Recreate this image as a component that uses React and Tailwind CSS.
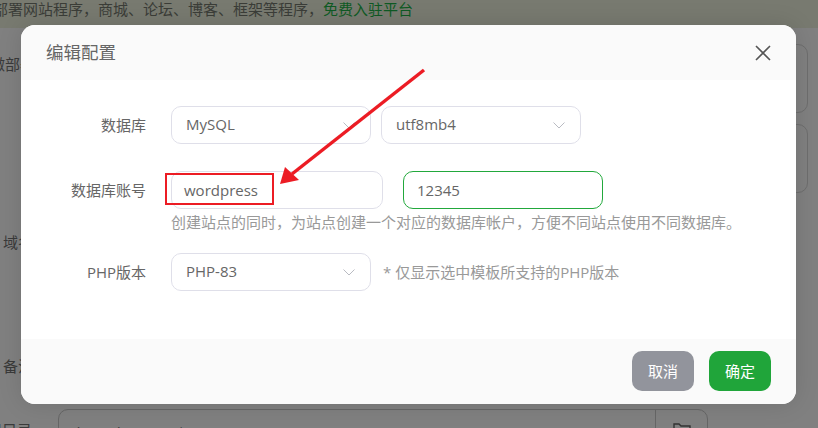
const FONT = 'font-["Open_Sans","Noto_Sans_CJK_SC",sans-serif]';

function Chevron({ className }) {
  return (
    <svg className={className} width="12" height="7" viewBox="0 0 12 7" fill="none" stroke="#b9bbc2" strokeWidth="1">
      <path d="M.5.5L6 6l5.5-5.5" />
    </svg>
  );
}

function Select({ value, width }) {
  return (
    <div className={`flex h-[38px] items-center justify-between rounded-[10px] border border-[#dfdfe9] bg-white pl-[14px] pr-[15px] text-[15px] text-[#666666] ${width}`}>
      <span className="-mt-[2px]">{value}</span>
      <Chevron />
    </div>
  );
}

function Row({ label, children, className = '' }) {
  return (
    <div className={`flex items-center ${className}`}>
      <div className="mr-[25px] w-[125px] text-right text-[15px] text-[#666666]">{label}</div>
      {children}
    </div>
  );
}

function Background() {
  return (
    <div className="flex h-full flex-col bg-[#808080] text-[15px] leading-[22px] text-[#3a3a3a]">
      <div className="flex h-[28px] shrink-0 items-start whitespace-nowrap bg-[#787a70] text-[#3b3d38]">
        <span className="-ml-[7px] -mt-[2px]">部署网站程序，商城、论坛、博客、框架等程序，</span>
        <span className="-mt-[2px] text-[#0f5a24]">免费入驻平台</span>
      </div>
      <div className="flex-1">
        <div className="flex justify-between pt-[16px]">
          <span className="-ml-[10px] mt-[9px]">微部署</span>
          <div className="mr-[10px] flex flex-col gap-[11px]">
            <div className="h-[69px] w-[60px] rounded-[10px] border border-[#6e6e6e]" />
            <div className="h-[69px] w-[60px] rounded-[10px] border border-[#6e6e6e]" />
          </div>
        </div>
        <div className="mt-[38px] pl-[3px]">域名</div>
        <div className="mt-[102px] pl-[3px]">备注</div>
        <div className="mt-[32px] flex items-start">
          <span className="-ml-[13px] mt-[10px] w-[71px] whitespace-nowrap">根目录</span>
          <div className="flex h-[40px] w-[650px] rounded-[10px] border border-[#666666]">
            <span className="flex-1 pl-[15px] pt-[10px]">/www/wwwroot</span>
            <div className="flex w-[52px] justify-center border-l border-[#666666] pt-[12px]">
              <svg width="18" height="15" viewBox="0 0 18 15" fill="none" stroke="#333333" strokeWidth="1.4">
                <path d="M1 13V2h5l2 2h9v9z" />
              </svg>
            </div>
          </div>
        </div>
      </div>
    </div>
  );
}

export default function App() {
  return (
    <div className={`relative h-[428px] w-[818px] overflow-hidden ${FONT}`}>
      <Background />

      <div className="absolute left-[21px] top-[25px] flex h-[379px] w-[775px] flex-col overflow-hidden rounded-[14px] bg-white shadow-[0_0_24px_rgba(0,0,0,0.12)]">
        <div className="flex h-[55px] shrink-0 items-center justify-between bg-[#fafafa] px-[25px]">
          <span className="text-[17.5px] text-[#666666]">编辑配置</span>
          <svg width="16" height="16" viewBox="0 0 16 16" stroke="#555555" strokeWidth="1.6">
            <path d="M1 1l14 14M15 1L1 15" />
          </svg>
        </div>

        <div className="flex-1 pt-[26px]">
          <Row label="数据库">
            <Select value="MySQL" width="w-[200px]" />
            <div className="w-[10px]" />
            <Select value="utf8mb4" width="w-[200px]" />
          </Row>

          <Row label="数据库账号" className="mt-[27px]">
            <div className="flex h-[38px] w-[212px] items-center rounded-[10px] border border-[#dfdfe9] pl-[12px] text-[15px] text-[#666666]">
              wordpress
            </div>
            <div className="w-[20px]" />
            <div className="flex h-[38px] w-[200px] items-center rounded-[10px] border border-[#22a83c] pl-[13px] text-[15px] text-[#666666]">
              12345
            </div>
          </Row>
          <div className="ml-[150px] mt-[2px] text-[15px] leading-[22px] text-[#999999]">
            创建站点的同时，为站点创建一个对应的数据库帐户，方便不同站点使用不同数据库。
          </div>

          <Row label="PHP版本" className="mt-[20px]">
            <Select value="PHP-83" width="w-[200px]" />
            <span className="ml-[12px] text-[15px] text-[#999999]">* 仅显示选中模板所支持的PHP版本</span>
          </Row>
        </div>

        <div className="flex h-[65px] shrink-0 items-start justify-end gap-[15px] bg-[#fafafa] pr-[25px] pt-[12px]">
          <button className="h-[40px] w-[62px] rounded-[10px] bg-[#92949c] text-[15px] text-white">取消</button>
          <button className="h-[40px] w-[62px] rounded-[10px] bg-[#20a53a] text-[15px] text-white">确定</button>
        </div>
      </div>

      {/* annotation drawn over the screenshot */}
      <div className="absolute left-[165px] top-[173px] h-[32px] w-[109px] border-2 border-[#ec1c24]" />
      <svg className="absolute left-0 top-0" width="818" height="428" fill="none">
        <path d="M424 70L292 174" stroke="#ec1c24" strokeWidth="3.5" />
        <path d="M280 184l5-17 14 13z" fill="#ec1c24" />
      </svg>
    </div>
  );
}
